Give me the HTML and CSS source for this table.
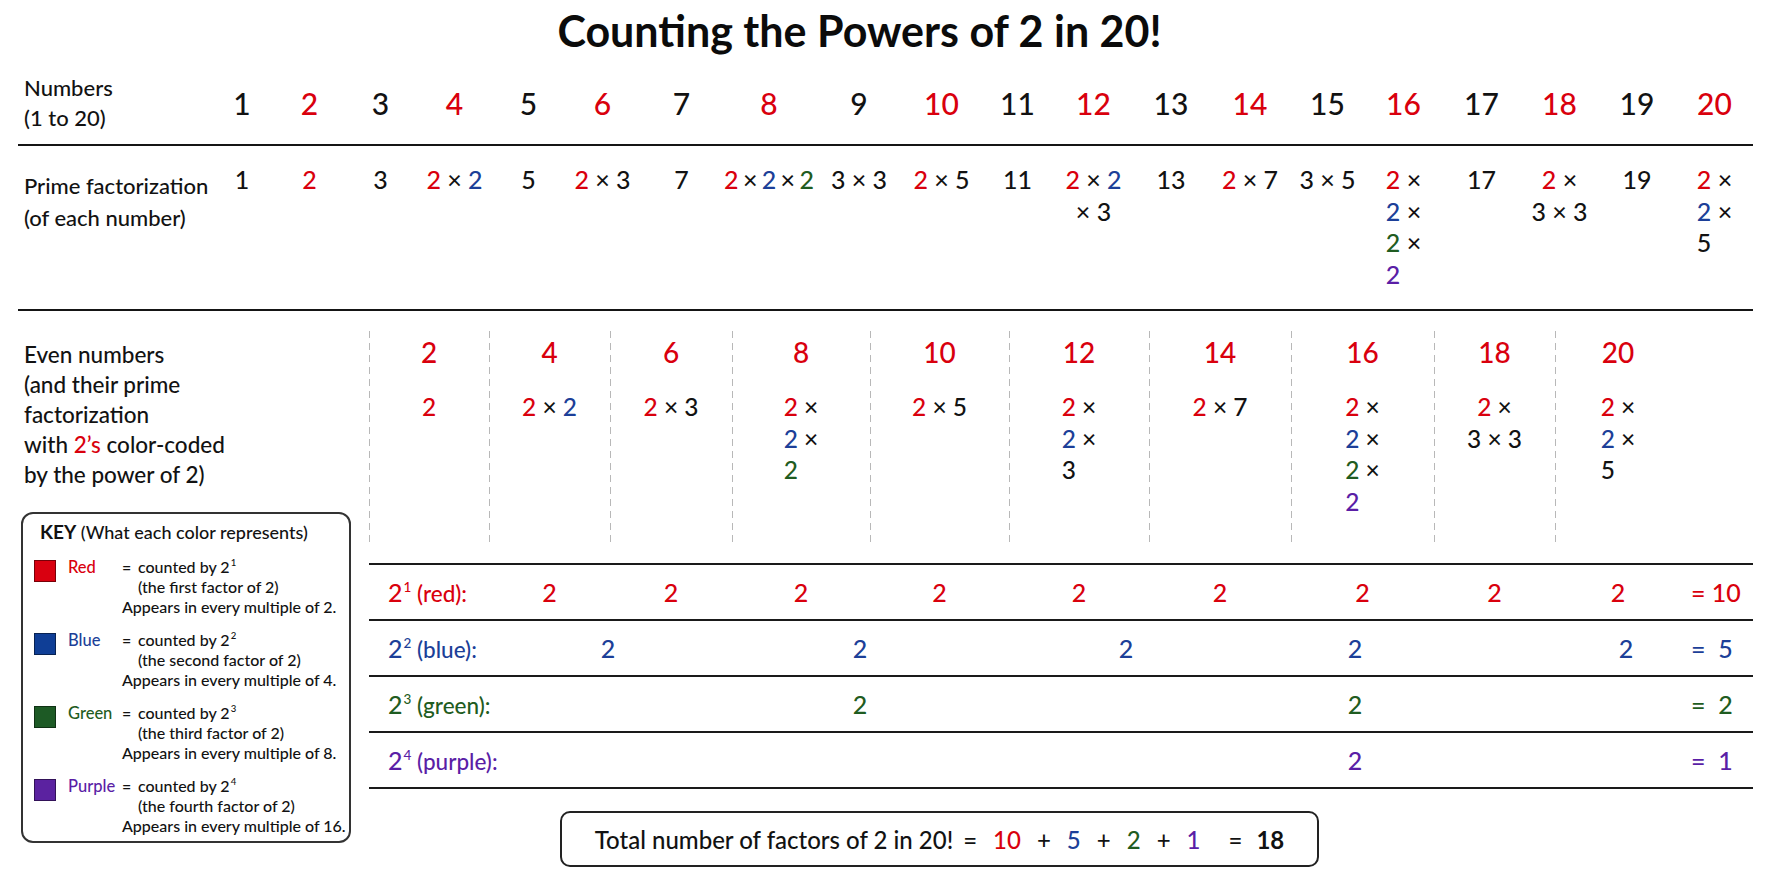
FILE: index.html
```html
<!DOCTYPE html>
<html lang="en">
<head>
<meta charset="utf-8">
<title>Counting the Powers of 2 in 20!</title>
<link rel="stylesheet" href="styles.css">
</head>
<body>
<main class="page">
  <h1 class="title">Counting the Powers of 2 in 20!</h1>

  <section class="top-table">
    <div class="tt-row tt-head">
      <div class="tt-label">Numbers<br>(1 to 20)</div>
      <div class="num">1</div>
      <div class="num r">2</div>
      <div class="num">3</div>
      <div class="num r">4</div>
      <div class="num">5</div>
      <div class="num r">6</div>
      <div class="num">7</div>
      <div class="num r">8</div>
      <div class="num">9</div>
      <div class="num r">10</div>
      <div class="num">11</div>
      <div class="num r">12</div>
      <div class="num">13</div>
      <div class="num r">14</div>
      <div class="num">15</div>
      <div class="num r">16</div>
      <div class="num">17</div>
      <div class="num r">18</div>
      <div class="num">19</div>
      <div class="num r">20</div>
    </div>
    <div class="tt-row tt-factor">
      <div class="tt-label">Prime factorization<br>(of each number)</div>
      <div class="fac">1</div>
      <div class="fac"><span class="r">2</span></div>
      <div class="fac">3</div>
      <div class="fac"><span class="r">2</span> × <span class="b">2</span></div>
      <div class="fac">5</div>
      <div class="fac"><span class="r">2</span> × 3</div>
      <div class="fac">7</div>
      <div class="fac tight"><span class="r">2</span> × <span class="b">2</span> × <span class="g">2</span></div>
      <div class="fac">3 × 3</div>
      <div class="fac"><span class="r">2</span> × 5</div>
      <div class="fac">11</div>
      <div class="fac"><div><span class="r">2</span> × <span class="b">2</span></div><div>× 3</div></div>
      <div class="fac">13</div>
      <div class="fac"><span class="r">2</span> × 7</div>
      <div class="fac">3 × 5</div>
      <div class="fac"><span class="stack"><span class="ln"><span class="r">2</span> ×</span><span class="ln"><span class="b">2</span> ×</span><span class="ln"><span class="g">2</span> ×</span><span class="ln"><span class="p">2</span></span></span></div>
      <div class="fac">17</div>
      <div class="fac"><div><span class="r">2</span> ×</div><div>3 × 3</div></div>
      <div class="fac">19</div>
      <div class="fac"><span class="stack"><span class="ln"><span class="r">2</span> ×</span><span class="ln"><span class="b">2</span> ×</span><span class="ln">5</span></span></div>
    </div>
  </section>

  <section class="lower">
    <aside class="left">
      <p class="even-label">Even numbers<br>(and their prime<br>factorization<br>with <span class="r">2’s</span> color-coded<br>by the power of 2)</p>

      <div class="key">
        <div class="key-head"><b>KEY</b> (What each color represents)</div>

        <div class="key-item">
          <span class="swatch sw-r"></span>
          <span class="key-name r">Red</span>
          <div class="key-desc">
            <div><span class="eqk">=</span>counted by 2<sup>1</sup></div>
            <div class="ind">(the first factor of 2)</div>
            <div>Appears in every multiple of 2.</div>
          </div>
        </div>

        <div class="key-item">
          <span class="swatch sw-b"></span>
          <span class="key-name b">Blue</span>
          <div class="key-desc">
            <div><span class="eqk">=</span>counted by 2<sup>2</sup></div>
            <div class="ind">(the second factor of 2)</div>
            <div>Appears in every multiple of 4.</div>
          </div>
        </div>

        <div class="key-item">
          <span class="swatch sw-g"></span>
          <span class="key-name g">Green</span>
          <div class="key-desc">
            <div><span class="eqk">=</span>counted by 2<sup>3</sup></div>
            <div class="ind">(the third factor of 2)</div>
            <div>Appears in every multiple of 8.</div>
          </div>
        </div>

        <div class="key-item">
          <span class="swatch sw-p"></span>
          <span class="key-name p">Purple</span>
          <div class="key-desc">
            <div><span class="eqk">=</span>counted by 2<sup>4</sup></div>
            <div class="ind">(the fourth factor of 2)</div>
            <div>Appears in every multiple of 16.</div>
          </div>
        </div>
      </div>
    </aside>

    <div class="right">
      <div class="even-grid">
        <div class="ecol"><div class="enum">2</div><div class="efac"><span class="r">2</span></div></div>
        <div class="ecol"><div class="enum">4</div><div class="efac"><span class="r">2</span> × <span class="b">2</span></div></div>
        <div class="ecol"><div class="enum">6</div><div class="efac"><span class="r">2</span> × 3</div></div>
        <div class="ecol"><div class="enum">8</div><div class="efac"><span class="stack"><span class="ln"><span class="r">2</span> ×</span><span class="ln"><span class="b">2</span> ×</span><span class="ln"><span class="g">2</span></span></span></div></div>
        <div class="ecol"><div class="enum">10</div><div class="efac"><span class="r">2</span> × 5</div></div>
        <div class="ecol"><div class="enum">12</div><div class="efac"><span class="stack"><span class="ln"><span class="r">2</span> ×</span><span class="ln"><span class="b">2</span> ×</span><span class="ln">3</span></span></div></div>
        <div class="ecol"><div class="enum">14</div><div class="efac"><span class="r">2</span> × 7</div></div>
        <div class="ecol"><div class="enum">16</div><div class="efac"><span class="stack"><span class="ln"><span class="r">2</span> ×</span><span class="ln"><span class="b">2</span> ×</span><span class="ln"><span class="g">2</span> ×</span><span class="ln"><span class="p">2</span></span></span></div></div>
        <div class="ecol"><div class="enum">18</div><div class="efac"><div><span class="r">2</span> ×</div><div>3 × 3</div></div></div>
        <div class="ecol"><div class="enum">20</div><div class="efac"><span class="stack"><span class="ln"><span class="r">2</span> ×</span><span class="ln"><span class="b">2</span> ×</span><span class="ln">5</span></span></div></div>
      </div>

      <div class="counts">
        <div class="crow crow-red r">
          <div class="clabel"><span class="base">2</span><sup>1</sup> (red):</div>
          <div class="cv">2</div><div class="cv">2</div><div class="cv">2</div>
          <div class="cv">2</div><div class="cv">2</div><div class="cv">2</div>
          <div class="cv">2</div><div class="cv">2</div><div class="cv">2</div>
          <div class="ct">= 10</div>
        </div>
        <div class="crow crow-slot b">
          <div class="clabel"><span class="base">2</span><sup>2</sup> (blue):</div>
          <div class="cv s1">2</div>
          <div class="cv s3">2</div>
          <div class="cv s5">2</div>
          <div class="cv s7">2</div>
          <div class="cv s9">2</div>
          <div class="ct st">=&nbsp; 5</div>
        </div>
        <div class="crow crow-slot g">
          <div class="clabel"><span class="base">2</span><sup>3</sup> (green):</div>
          <div class="cv s3">2</div>
          <div class="cv s7">2</div>
          <div class="ct st">=&nbsp; 2</div>
        </div>
        <div class="crow crow-slot p">
          <div class="clabel"><span class="base">2</span><sup>4</sup> (purple):</div>
          <div class="cv s7">2</div>
          <div class="ct st">=&nbsp; 1</div>
        </div>
      </div>

      <div class="total">
        <span>Total number of factors of 2 in 20!</span>
        <span class="eq1">=</span>
        <span class="r">10</span>
        <span>+</span>
        <span class="b">5</span>
        <span>+</span>
        <span class="g">2</span>
        <span>+</span>
        <span class="p">1</span>
        <span class="eq2">=</span>
        <b class="sum">18</b>
      </div>
    </div>
  </section>
</main>
</body>
</html>
```

FILE: styles.css
```css
* { box-sizing: border-box; margin: 0; padding: 0; }

html, body { background: #ffffff; }

body {
  font-family: Lato, "Open Sans", "Noto Sans", sans-serif;
  font-weight: 500;
  color: #121212;
  width: 1774px;
  height: 887px;
  overflow: hidden;
}

.r { color: #d9000d; }
.b { color: #1c3f98; }
.g { color: #1f5c21; }
.p { color: #5a1ea6; }

.page { padding: 0 21px 0 18px; }

.title {
  font-size: 43px;
  font-weight: 700;
  line-height: 62px;
  height: 62px;
  text-align: center;
  color: #0b0b0b;
  padding-right: 52px;
}

/* ---------- top table ---------- */
.tt-row {
  display: grid;
  grid-template-columns: 191px 66px 69px 73px 75px 73px 75px 83px 92px 88px 77px 75px 77px 78px 80px 75px 77px 79px 77px 78px 77px;
  border-bottom: 2px solid #151515;
}

.tt-head { height: 84px; align-items: center; }

.tt-label {
  font-size: 22px;
  line-height: 30px;
  padding-left: 6px;
  white-space: nowrap;
}

.num { font-size: 30px; line-height: 36px; text-align: center; }

.tt-factor { height: 165px; padding-top: 18px; align-items: start; }
.tt-factor .tt-label { line-height: 32px; padding-top: 6px; }

.fac {
  font-size: 25px;
  line-height: 31.5px;
  text-align: center;
  white-space: nowrap;
}
.fac.tight { word-spacing: -2px; }

.stack { display: inline-block; text-align: left; }
.stack .ln { display: block; }

/* ---------- lower section ---------- */
.lower { display: flex; }

.left { width: 352px; padding-top: 29px; }

.even-label {
  font-size: 22.5px;
  line-height: 30px;
  padding-left: 6px;
  white-space: nowrap;
}

.key {
  margin: 22px 0 0 3px;
  width: 330px;
  height: 331px;
  border: 2px solid #333;
  border-radius: 12px;
  padding: 7px 0 0 11px;
}

.key-head {
  font-size: 18px;
  line-height: 22px;
  padding-left: 6px;
  margin-bottom: 14px;
  white-space: nowrap;
}
.key-head b { font-size: 19px; font-weight: 700; }

.key-item {
  display: grid;
  grid-template-columns: 22px 66px 1fr;
  font-size: 16px;
  line-height: 20px;
  margin-bottom: 13px;
  white-space: nowrap;
}

.swatch {
  width: 22px;
  height: 22px;
  margin-top: 3px;
  border: 1px solid rgba(0, 0, 0, 0.45);
}
.sw-r { background: #d90010; }
.sw-b { background: #0f3e96; }
.sw-g { background: #1d5a25; }
.sw-p { background: #5b22a0; }

.key-name { padding-left: 12px; font-size: 16.5px; }
.key-desc .ind { padding-left: 16px; }
.eqk { display: inline-block; width: 16px; }

sup {
  font-size: 0.6em;
  vertical-align: 0.75em;
  line-height: 0;
  margin-left: 1px;
}

.right { width: 1384px; padding-top: 20px; }

.even-grid {
  display: grid;
  grid-template-columns: 120px 121px 122px 138px 139px 140px 142px 143px 121px 126px;
  height: 214px;
}

.ecol {
  background: linear-gradient(#b8b8b8 58%, transparent 58%) 0 0 / 1px 12px repeat-y;
  text-align: center;
  white-space: nowrap;
}

.enum {
  font-size: 28px;
  line-height: 30px;
  padding-top: 6px;
  color: #d9000d;
}

.efac {
  margin-top: 24px;
  font-size: 24.5px;
  line-height: 31.5px;
}

.counts { margin-top: 18px; border-top: 2px solid #1a1a1a; }

.crow {
  display: grid;
  height: 56px;
  align-items: center;
  border-bottom: 2px solid #1a1a1a;
  font-size: 25px;
}

.crow-red {
  grid-template-columns: 120px 121px 122px 138px 139px 140px 142px 143px 121px 126px 72px;
}

.crow-slot {
  grid-template-columns: 189px 100px 152px 100px 166px 100px 129px 100px 171px 100px 77px;
}

.clabel {
  font-size: 22.5px;
  padding-left: 19px;
  white-space: nowrap;
}
.clabel .base { font-size: 25px; }

.cv { text-align: center; }
.s1 { grid-column: 2; }
.s3 { grid-column: 4; }
.s5 { grid-column: 6; }
.s7 { grid-column: 8; }
.s9 { grid-column: 10; }

.ct { padding-left: 10px; white-space: nowrap; }
.ct.st { grid-column: 11; padding-left: 15px; }

.total {
  margin: 22px 0 0 191px;
  width: 759px;
  height: 56px;
  border: 2px solid #222;
  border-radius: 10px;
  display: flex;
  align-items: center;
  justify-content: center;
  gap: 16px;
  font-size: 24px;
  white-space: nowrap;
}
.total .eq1 { margin-left: -6px; }
.total .eq2 { margin-left: 12px; }
.total .sum { font-weight: 700; margin-left: -2px; }
```
